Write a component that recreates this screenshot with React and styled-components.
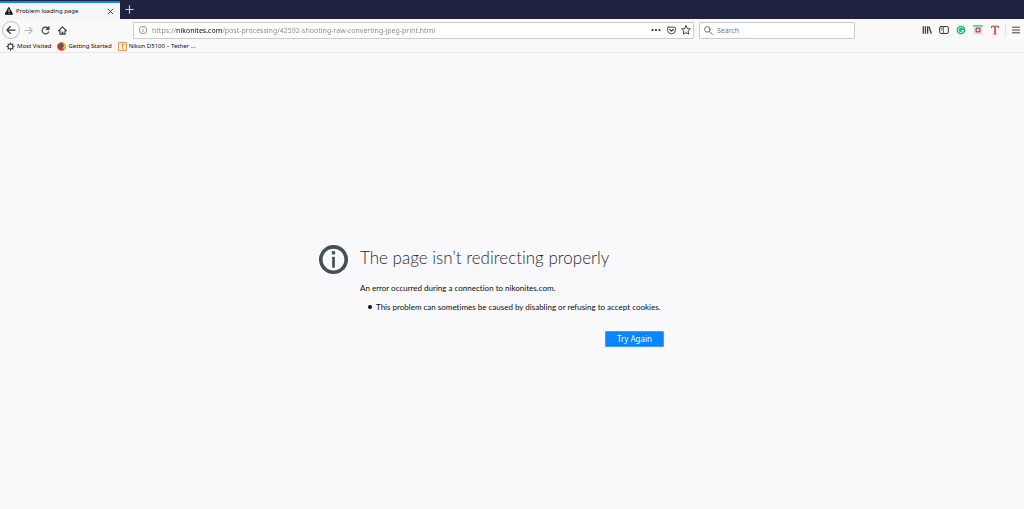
import React from "react";
import styled, { createGlobalStyle } from "styled-components";

const GlobalStyle = createGlobalStyle`
  * { box-sizing: border-box; }
  body { margin: 0; background: #f9f9fb; color: #0c0c0d; font-family: "Noto Sans", "Open Sans", sans-serif; }
  button, input { font: inherit; color: inherit; }
`;

const Window = styled.div`
  min-height: 100vh;
  display: flex;
  flex-direction: column;
`;

const TabStrip = styled.header`
  display: flex;
  height: 19px;
  background: #202340;
`;

const Tab = styled.div`
  display: flex;
  align-items: center;
  gap: 3px;
  width: 120px;
  margin-top: 1px;
  padding: 0 6px 0 5px;
  border-top: 2px solid #0a84ff;
  background: #f5f6f7;
  font-size: 6px;
  line-height: 16px;
`;

const TabTitle = styled.span`
  flex: 1;
  white-space: nowrap;
`;

const IconButton = styled.button`
  display: flex;
  align-items: center;
  justify-content: center;
  flex: none;
  width: ${(p) => p.$size || 10}px;
  height: ${(p) => p.$size || 10}px;
  padding: 0;
  border: ${(p) => (p.$round ? "1px solid #bdbdc0" : "0")};
  border-radius: ${(p) => (p.$round ? "50%" : "2px")};
  background: ${(p) => (p.$round ? "#fdfdfe" : "transparent")};
  color: ${(p) => p.$color || "#38383d"};
`;

const NewTab = styled(IconButton)`
  width: 18px;
  height: 19px;
`;

const Toolbar = styled.nav`
  display: flex;
  align-items: center;
  height: 22px;
  padding: 0 3px 0 2px;
  background: #f9f9fa;
`;

const NavButtons = styled.div`
  display: flex;
  align-items: center;
`;

const Spacer = styled.div`
  flex: ${(p) => p.$width} 1 ${(p) => p.$width}px;
`;

const Field = styled.form`
  display: flex;
  align-items: center;
  gap: 4px;
  flex: ${(p) => p.$width} 1 ${(p) => p.$width}px;
  min-width: 0;
  height: 17px;
  margin-left: ${(p) => p.$gap || 0}px;
  padding: 0 2px 0 4px;
  border: 1px solid #cccccf;
  border-radius: 1px;
  background: #fff;
`;

const TextInput = styled.input`
  flex: 1;
  min-width: 0;
  height: 15px;
  padding: 0;
  border: 0;
  outline: 0;
  background: transparent;
  font-size: 7px;

  &::placeholder { color: #77777b; opacity: 1; }
`;

const AddressInput = styled(TextInput)`
  color: transparent;
  caret-color: #0c0c0d;
  background: linear-gradient(to right, #85858a 24px, #0c0c0d 24px 70px, #85858a 70px);
  background-clip: text;
  -webkit-background-clip: text;
`;

const FieldActions = styled.div`
  display: flex;
  align-items: center;
  gap: 5px;
`;

const Extensions = styled.div`
  display: flex;
  align-items: center;
  gap: 7px;
`;

const MenuArea = styled.div`
  display: flex;
  margin-left: 5px;
  padding-left: 5px;
  border-left: 1px solid #e0e0e3;
`;

const Bookmarks = styled.nav`
  display: flex;
  align-items: center;
  gap: 6px;
  height: 12px;
  padding: 0 6px;
  border-bottom: 1px solid #e9e9eb;
  background: #f9f9fa;
`;

const Bookmark = styled.a`
  display: flex;
  align-items: center;
  gap: 2px;
  color: #0c0c0d;
  font-size: 6px;
  line-height: 11px;
  text-decoration: none;
  white-space: nowrap;
`;

const ErrorPage = styled.main`
  flex: 1;
  display: grid;
  grid-template-columns: 1fr 304px 1fr;
  column-gap: 12px;
  align-content: center;
  padding-top: 30px;
`;

const InfoMark = styled.div`
  display: flex;
  justify-content: flex-end;
  align-items: flex-start;
`;

const Message = styled.section`
  display: flex;
  flex-direction: column;
  font-family: Lato, "Open Sans", sans-serif;
  font-variant-ligatures: none;
  font-size: 8px;
  line-height: 12px;
  white-space: nowrap;
`;

const Title = styled.h1`
  margin: 0 0 12px;
  color: #2a2a2e;
  font-size: 17px;
  font-weight: 300;
  line-height: 25px;
`;

const Description = styled.p`
  margin: 0 0 7px;
`;

const Reasons = styled.ul`
  margin: 0 0 18px;
  padding-left: 8px;
  list-style: none;
`;

const Reason = styled.li`
  display: flex;
  align-items: center;
  gap: 4px;

  &::before {
    content: "";
    flex: none;
    width: 4px;
    height: 4px;
    border-radius: 50%;
    background: currentColor;
  }
`;

const RetryButton = styled.button`
  align-self: flex-end;
  width: 59px;
  height: 16px;
  padding: 0;
  border: 1px solid #3c9dfa;
  border-radius: 1px;
  outline: 0;
  background: #0a84ff;
  color: #fff;
  font-family: "Noto Sans", sans-serif;
  line-height: 14px;
`;

function Icon({ size = 10, children, ...rest }) {
  return (
    <svg width={size} height={size} viewBox="0 0 16 16" fill="none" stroke="currentColor" strokeWidth="2" strokeLinecap="round" strokeLinejoin="round" aria-hidden="true" {...rest}>
      {children}
    </svg>
  );
}

const WarningIcon = () => (
  <Icon size={8}>
    <path d="M8 1.5 15 14.5H1z" fill="currentColor" />
    <path d="M8 5.5v4M8 12.4v.1" stroke="#fff" />
  </Icon>
);

const InfoIcon = ({ size = 8, stroke = 1.4 }) => (
  <Icon size={size} strokeWidth={stroke} strokeLinecap="butt">
    <circle cx="8" cy="8" r={8 - stroke / 2} />
    <path d="M8 6.6v5.8M8 3.4v1.8" />
  </Icon>
);

const FirefoxIcon = () => (
  <Icon size={9} stroke="none">
    <circle cx="8" cy="8" r="7.5" fill="#e8412c" />
    <path d="M8 1a7 7 0 0 1 7 7c0 2-1 4-2.500 5L7 8z" fill="#fdbb2d" />
    <path d="M5 2c3-2 7 0 7 4 0 3-2 5-5 4C5 9 4 6 5 2z" fill="#3c6e45" />
    <path d="M1 4c1 2 3 2 5 3-1 2 1 4 4 4-2 3-7 3-9-1z" fill="#d9264a" />
  </Icon>
);

export default function App() {
  return (
    <Window>
      <GlobalStyle />
      <TabStrip>
        <Tab>
          <WarningIcon />
          <TabTitle>Problem loading page</TabTitle>
          <IconButton $size={8} aria-label="Close tab">
            <Icon size={7}><path d="M2.500 2.500l11 11M13.500 2.500l-11 11" /></Icon>
          </IconButton>
        </Tab>
        <NewTab $color="#d0d0dc" aria-label="New tab">
          <Icon size={9}><path d="M8 1.500v13M1.500 8h13" /></Icon>
        </NewTab>
      </TabStrip>

      <Toolbar aria-label="Navigation">
        <NavButtons>
          <IconButton $size={18} $round aria-label="Back">
            <Icon><path d="M14.500 8h-13M7 2.500 1.500 8 7 13.500" /></Icon>
          </IconButton>
          <IconButton $size={17} $color="#b5b5b8" aria-label="Forward">
            <Icon size={9}><path d="M1.500 8h13M9 2.500 14.500 8 9 13.500" /></Icon>
          </IconButton>
          <IconButton $size={17} aria-label="Reload">
            <Icon size={9}><path d="M13.500 10.500A6 6 0 1 1 12.500 4" /><path d="M14.500 1v5.500H9z" fill="currentColor" strokeWidth="1" /></Icon>
          </IconButton>
          <IconButton $size={17} aria-label="Home">
            <Icon size={9}><path d="M1 8.500 8 1.500l7 7M3.500 8v6.500h9V8" /><path d="M8 14v-4" strokeWidth="3" strokeLinecap="butt" /></Icon>
          </IconButton>
        </NavButtons>
        <Spacer $width={62} />
        <Field $width={561} onSubmit={(e) => e.preventDefault()}>
          <IconButton type="button" $color="#68686d" aria-label="Site information"><InfoIcon /></IconButton>
          <AddressInput aria-label="Address" defaultValue="https://nikonites.com/post-processing/42592-shooting-raw-converting-jpeg-print.html" />
          <FieldActions>
            <IconButton type="button" aria-label="Page actions">
              <Icon stroke="none" fill="currentColor"><circle cx="2.500" cy="8" r="1.800" /><circle cx="8" cy="8" r="1.800" /><circle cx="13.500" cy="8" r="1.800" /></Icon>
            </IconButton>
            <IconButton type="button" aria-label="Save to Pocket">
              <Icon size={9} strokeWidth="1.600"><path d="M2.500 2h11q1.500 0 1.500 1.500V7A7 7 0 0 1 1 7V3.500Q1 2 2.500 2z" /><path d="M4.800 6.200 8 9.200l3.200-3" strokeWidth="2" /></Icon>
            </IconButton>
            <IconButton type="button" aria-label="Bookmark this page">
              <Icon strokeWidth="1.500"><path d="M8 1.200l2.100 4.500 4.900.6-3.600 3.400.9 4.900L8 12.200l-4.300 2.400.9-4.900L1 6.300l4.900-.6z" /></Icon>
            </IconButton>
          </FieldActions>
        </Field>
        <Field $width={156} $gap={5} role="search" onSubmit={(e) => e.preventDefault()}>
          <Icon size={9} color="#5c5c61" strokeWidth="1.600"><circle cx="6" cy="6" r="5" /><path d="M10 10l5 5" /></Icon>
          <TextInput type="search" aria-label="Search" placeholder="Search" />
        </Field>
        <Spacer $width={67} />
        <Extensions>
          <IconButton aria-label="Library">
            <Icon strokeLinecap="butt"><path d="M2 2v12M5.500 2v12M9 2v12M11 2.500l4 11.500" /></Icon>
          </IconButton>
          <IconButton aria-label="Sidebars">
            <Icon strokeWidth="1.600"><rect x="1" y="2.500" width="14" height="11" rx="2" /><path d="M7 3v10M3.500 5.500h1.500M3.500 8h1.500" strokeWidth="1.200" /></Icon>
          </IconButton>
          <IconButton $color="#15b56a" aria-label="Grammar checker">
            <Icon><circle cx="8" cy="8" r="6" fill="currentColor" /><path d="M11 5a4.200 4.200 0 1 0 1 4H8.500" stroke="#fff" strokeWidth="1.600" /></Icon>
          </IconButton>
          <IconButton aria-label="Shield extension">
            <Icon strokeWidth="1.200"><path d="M2 3v11h12V3" stroke="#c5c5c5" /><path d="M1 1.500h14" stroke="#45a878" strokeWidth="2" /><rect x="5" y="5" width="6" height="6" stroke="#b43a36" strokeWidth="2" /></Icon>
          </IconButton>
          <IconButton $color="#cf3b35" aria-label="Text extension">
            <Icon strokeLinecap="butt"><path d="M2.500 5V2h11v3M5.500 14.500h5" strokeWidth="1.600" /><path d="M8 2v12" strokeWidth="2.500" /></Icon>
          </IconButton>
        </Extensions>
        <MenuArea>
          <IconButton aria-label="Open menu">
            <Icon><path d="M2.500 3.500h11M2.500 8h11M2.500 12.500h11" strokeWidth="1.600" /></Icon>
          </IconButton>
        </MenuArea>
      </Toolbar>

      <Bookmarks aria-label="Bookmarks">
        <Bookmark href="#most-visited">
          <Icon size={9} color="#38383d" strokeWidth="1.800"><circle cx="8" cy="8" r="4.500" /><path d="M8 1.500v1.500M8 13v1.500M1.500 8H3M13 8h1.500M3.500 3.500l1 1M11.500 11.500l1 1M12.500 3.500l-1 1M4.500 11.500l-1 1" /></Icon>
          Most Visited
        </Bookmark>
        <Bookmark href="#getting-started"><FirefoxIcon />Getting Started</Bookmark>
        <Bookmark href="#nikon">
          <Icon size={9} color="#e48a32" strokeWidth="1.600" strokeLinecap="butt"><rect x="1" y="1" width="14" height="14" fill="#fff6ea" /><path d="M4.500 5h7M8 5v7.500" /></Icon>
          Nikon D5100 – Tether ...
        </Bookmark>
      </Bookmarks>

      <ErrorPage>
        <InfoMark><Icon size={29} color="#42505a" strokeLinecap="butt"><circle cx="8" cy="8" r="7" /><path d="M8 6.500v6" strokeWidth="1.500" /><path d="M8 3.400v1.800" strokeWidth="1.800" /></Icon></InfoMark>
        <Message>
          <Title>The page isn’t redirecting properly</Title>
          <Description>An error occurred during a connection to nikonites.com.</Description>
          <Reasons>
            <Reason>This problem can sometimes be caused by disabling or refusing to accept cookies.</Reason>
          </Reasons>
          <RetryButton>Try Again</RetryButton>
        </Message>
      </ErrorPage>
    </Window>
  );
}
